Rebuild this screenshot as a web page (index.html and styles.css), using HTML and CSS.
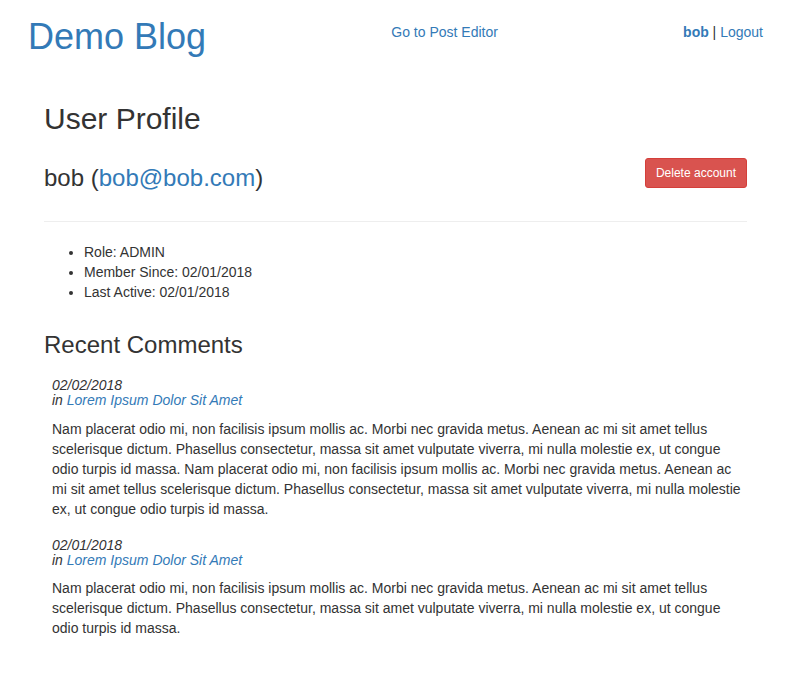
FILE: index.html
```html
<!DOCTYPE html>
<html lang="en">
<head>
<meta charset="utf-8">
<title>Demo Blog - User Profile</title>
<link rel="stylesheet" href="styles.css">
</head>
<body>
<header class="site-header">
  <h1 class="brand"><a href="#">Demo Blog</a></h1>
  <a class="nav-link editor-link" href="#">Go to Post Editor</a>
  <div class="nav-link user-links"><a href="#"><strong>bob</strong></a> | <a href="#">Logout</a></div>
</header>
<main class="container">
  <h2 class="page-title">User Profile</h2>
  <div class="profile-row">
    <h3 class="profile-name">bob (<a href="#">bob@bob.com</a>)</h3>
    <button class="btn-danger" type="button">Delete account</button>
  </div>
  <hr class="divider">
  <ul class="profile-info">
    <li>Role: ADMIN</li>
    <li>Member Since: 02/01/2018</li>
    <li>Last Active: 02/01/2018</li>
  </ul>
  <h3 class="section-title">Recent Comments</h3>
  <div class="comment">
    <div class="comment-meta">
      <div>02/02/2018</div>
      <div>in <a href="#">Lorem Ipsum Dolor Sit Amet</a></div>
    </div>
    <p class="comment-body">Nam placerat odio mi, non facilisis ipsum mollis ac. Morbi nec gravida metus. Aenean ac mi sit amet tellus scelerisque dictum. Phasellus consectetur, massa sit amet vulputate viverra, mi nulla molestie ex, ut congue odio turpis id massa. Nam placerat odio mi, non facilisis ipsum mollis ac. Morbi nec gravida metus. Aenean ac mi sit amet tellus scelerisque dictum. Phasellus consectetur, massa sit amet vulputate viverra, mi nulla molestie ex, ut congue odio turpis id massa.</p>
  </div>
  <div class="comment">
    <div class="comment-meta">
      <div>02/01/2018</div>
      <div>in <a href="#">Lorem Ipsum Dolor Sit Amet</a></div>
    </div>
    <p class="comment-body">Nam placerat odio mi, non facilisis ipsum mollis ac. Morbi nec gravida metus. Aenean ac mi sit amet tellus scelerisque dictum. Phasellus consectetur, massa sit amet vulputate viverra, mi nulla molestie ex, ut congue odio turpis id massa.</p>
  </div>
</main>
</body>
</html>
```
FILE: styles.css
```css
html, body {
  margin: 0;
  padding: 0;
  background: #fff;
}
body {
  font-family: "Liberation Sans", Arial, Helvetica, sans-serif;
  font-size: 14px;
  line-height: 20px;
  color: #333;
}
a {
  color: #337ab7;
  text-decoration: none;
}
.site-header {
  display: flex;
  justify-content: space-between;
  align-items: flex-start;
  padding: 17px 30px 0 28px;
}
.brand {
  margin: 0 0 25.4px;
  font-size: 36px;
  font-weight: 500;
  line-height: 1.1;
}
.nav-link {
  margin-top: 5px;
  line-height: 20px;
}
.user-links strong {
  font-weight: 700;
}
.container {
  padding: 0 46px 0 44px;
}
.page-title {
  margin: 20px 0 10px;
  font-size: 30px;
  font-weight: 500;
  line-height: 1.1;
}
.profile-row {
  display: flex;
  justify-content: space-between;
  align-items: flex-start;
}
.profile-name {
  margin: 20px 0 10px;
  font-size: 24px;
  font-weight: 500;
  line-height: 1.1;
}
.btn-danger {
  margin-top: 13px;
  padding: 5px 10px;
  font-family: inherit;
  font-size: 12px;
  line-height: 1.5;
  color: #fff;
  background: #d9534f;
  border: 1px solid #d43f3a;
  border-radius: 3px;
  cursor: pointer;
}
.divider {
  margin: 20px 0;
  border: 0;
  border-top: 1px solid #eee;
  height: 0;
}
.profile-info {
  margin: 0 0 10px;
  padding-left: 40px;
}
.section-title {
  margin: 30px 0 10px;
  font-size: 24px;
  font-weight: 500;
  line-height: 1.1;
}
.comment {
  padding: 9px 4px 0 8px;
}
.comment-meta {
  font-style: italic;
  line-height: 1.1;
  margin-bottom: 10px;
}
.comment-body {
  margin: 0 0 10px;
}
```
